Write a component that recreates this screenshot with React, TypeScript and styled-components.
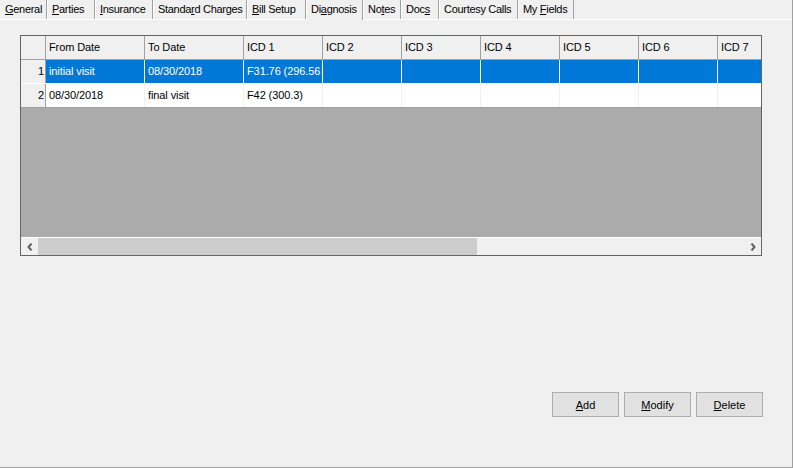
import React from "react";
import styled, { createGlobalStyle } from "styled-components";

const Global = createGlobalStyle`
  html, body { margin: 0; padding: 0; background: #f0f0f0; }
  body { font-family: "Liberation Sans", Arial, sans-serif; font-size: 11px; color: #000; }
`;

const Window = styled.div`
  width: 793px;
  height: 468px;
  box-sizing: border-box;
  border-right: 1px solid #a0a0a0;
  border-bottom: 1px solid #a0a0a0;
  background: #f0f0f0;
  display: flex;
  flex-direction: column;
  overflow: hidden;
`;

const TabStrip = styled.div`
  display: flex;
  height: 19px;
  border-bottom: 1px solid #ffffff;
  align-items: stretch;
`;

const Tab = styled.div<{ $w: number; $active?: boolean }>`
  width: ${(p) => p.$w}px;
  box-sizing: border-box;
  border-left: 1px solid #ffffff;
  border-right: 1px solid #a0a0a0;
  padding-left: 4px;
  line-height: 18px;
  letter-spacing: -0.3px;
  white-space: nowrap;
  overflow: hidden;
  background: #f0f0f0;
  ${(p) => (p.$active ? "margin-bottom: -1px; height: 20px;" : "")}
  &:first-child { border-left: none; padding-left: 5px; }
`;

const Panel = styled.div`
  flex: 1;
  padding: 15px 30px 0 20px;
  display: flex;
  flex-direction: column;
`;

const Grid = styled.div`
  width: 742px;
  height: 221px;
  box-sizing: border-box;
  border: 1px solid #646464;
  background: #ababab;
  display: flex;
  flex-direction: column;
  overflow: hidden;
`;

const Rows = styled.div`
  flex: 1;
  overflow: hidden;
`;

const Row = styled.div<{ $kind: "header" | "selected" | "normal" }>`
  display: grid;
  grid-template-columns: 25px 99px 99px repeat(6, 79px) 79px;
  height: 24px;
  background: ${(p) => (p.$kind === "header" ? "#f0f0f0" : p.$kind === "selected" ? "#0078d7" : "#ffffff")};
  color: ${(p) => (p.$kind === "selected" ? "#ffffff" : "#000000")};
  border-bottom: 1px solid ${(p) => (p.$kind === "selected" ? "#ffffff" : "#a0a0a0")};
  box-sizing: border-box;
  width: 800px;
`;

const Cell = styled.div<{ $line: string; $rowHead?: boolean }>`
  box-sizing: border-box;
  border-right: 1px solid ${(p) => p.$line};
  padding: 0 ${(p) => (p.$rowHead ? "1px" : "0")} 0 ${(p) => (p.$rowHead ? "0" : "3px")};
  text-align: ${(p) => (p.$rowHead ? "right" : "left")};
  line-height: 23px;
  letter-spacing: -0.1px;
  white-space: nowrap;
  overflow: hidden;
  background: ${(p) => (p.$rowHead ? "#f0f0f0" : "transparent")};
  color: ${(p) => (p.$rowHead ? "#000" : "inherit")};
`;

const ScrollBar = styled.div`
  height: 17px;
  border-top: 1px solid #ffffff;
  background: #f0f0f0;
  display: flex;
  align-items: stretch;
`;

const ArrowBtn = styled.div`
  width: 17px;
  display: flex;
  align-items: center;
  justify-content: center;
`;

const Track = styled.div`
  flex: 1;
  display: flex;
`;

const Thumb = styled.div`
  width: 439px;
  background: #cdcdcd;
`;

const ButtonRow = styled.div`
  margin-top: 136px;
  margin-right: -1px;
  display: flex;
  justify-content: flex-end;
  gap: 5px;
`;

const Button = styled.button`
  width: 67px;
  height: 25px;
  box-sizing: border-box;
  border: 1px solid #adadad;
  background: #e1e1e1;
  font-family: "Liberation Sans", Arial, sans-serif;
  font-size: 11px;
  color: #000;
  padding: 0;
  cursor: default;
`;

const U = styled.span`
  text-decoration: underline;
`;

const tabs: { pre: string; u: string; post: string; w: number; active?: boolean }[] = [
  { pre: "", u: "G", post: "eneral", w: 47 },
  { pre: "", u: "P", post: "arties", w: 48 },
  { pre: "", u: "I", post: "nsurance", w: 58 },
  { pre: "Standa", u: "r", post: "d Charges", w: 94 },
  { pre: "", u: "B", post: "ill Setup", w: 59 },
  { pre: "Di", u: "a", post: "gnosis", w: 57, active: true },
  { pre: "No", u: "t", post: "es", w: 38 },
  { pre: "Doc", u: "s", post: "", w: 38 },
  { pre: "Courtesy Calls", u: "", post: "", w: 79 },
  { pre: "My ", u: "F", post: "ields", w: 56 },
];

const headers = ["From Date", "To Date", "ICD 1", "ICD 2", "ICD 3", "ICD 4", "ICD 5", "ICD 6", "ICD 7"];
const data = [
  ["initial visit", "08/30/2018", "F31.76 (296.56", "", "", "", "", "", ""],
  ["08/30/2018", "final visit", "F42 (300.3)", "", "", "", "", "", ""],
];

const Chevron = ({ dir }: { dir: "left" | "right" }) => (
  <svg width="6" height="8" viewBox="0 0 6 8">
    <path
      d={dir === "left" ? "M4.5 0.5 L1.5 4 L4.5 7.5" : "M1.5 0.5 L4.5 4 L1.5 7.5"}
      fill="none"
      stroke="#606060"
      strokeWidth="2"
    />
  </svg>
);

export default function App() {
  return (
    <Window>
      <Global />
      <TabStrip>
        {tabs.map((t, i) => (
          <Tab key={i} $w={t.w} $active={t.active}>
            {t.pre}
            {t.u && <U>{t.u}</U>}
            {t.post}
          </Tab>
        ))}
      </TabStrip>
      <Panel>
        <Grid>
          <Rows>
            <Row $kind="header">
              <Cell $line="#a0a0a0" $rowHead />
              {headers.map((h) => (
                <Cell key={h} $line="#a0a0a0">{h}</Cell>
              ))}
            </Row>
            {data.map((r, i) => (
              <Row key={i} $kind={i === 0 ? "selected" : "normal"}>
                <Cell $line="#a0a0a0" $rowHead>{i + 1}</Cell>
                {r.map((c, j) => (
                  <Cell key={j} $line={i === 0 ? "#ffffff" : "#f0f0f0"}>{c}</Cell>
                ))}
              </Row>
            ))}
          </Rows>
          <ScrollBar>
            <ArrowBtn><Chevron dir="left" /></ArrowBtn>
            <Track><Thumb /></Track>
            <ArrowBtn><Chevron dir="right" /></ArrowBtn>
          </ScrollBar>
        </Grid>
        <ButtonRow>
          <Button><U>A</U>dd</Button>
          <Button><U>M</U>odify</Button>
          <Button><U>D</U>elete</Button>
        </ButtonRow>
      </Panel>
    </Window>
  );
}
